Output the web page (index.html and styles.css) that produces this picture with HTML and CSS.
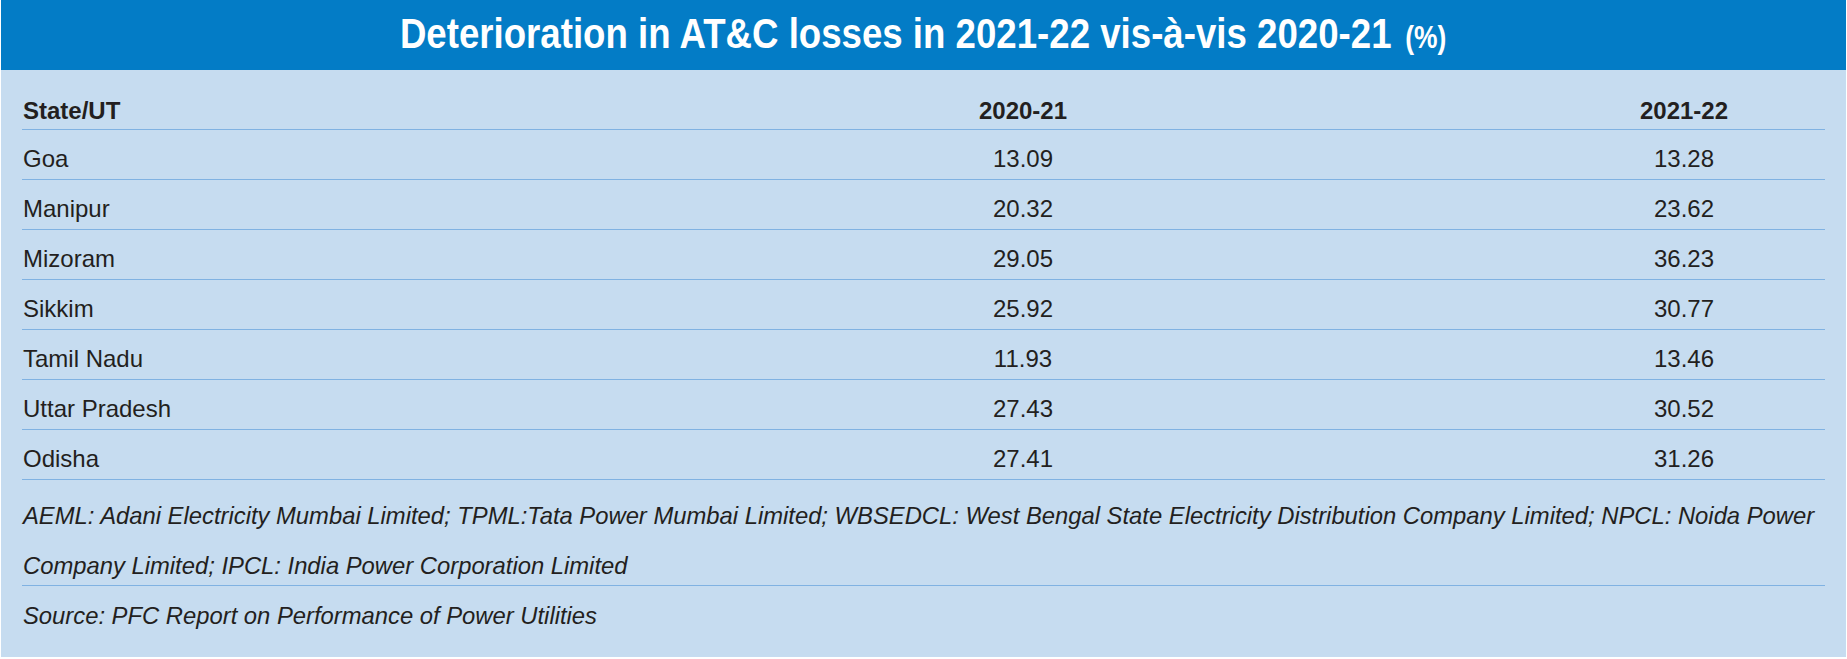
FILE: index.html
```html
<!DOCTYPE html>
<html lang="en">
<head>
<meta charset="utf-8">
<title>Deterioration in AT&amp;C losses</title>
<link rel="stylesheet" href="styles.css">
</head>
<body>
<div class="panel">
  <header class="banner">
    <h1 class="title"><span class="title-main">Deterioration in AT&amp;C losses in 2021-22 vis-à-vis 2020-21</span><span class="title-unit">(%)</span></h1>
  </header>
  <div class="body">
    <div class="table">
      <div class="row head">
        <div class="cell name">State/UT</div>
        <div class="cell num">2020-21</div>
        <div class="cell num">2021-22</div>
      </div>
      <div class="row">
        <div class="cell name">Goa</div>
        <div class="cell num">13.09</div>
        <div class="cell num">13.28</div>
      </div>
      <div class="row">
        <div class="cell name">Manipur</div>
        <div class="cell num">20.32</div>
        <div class="cell num">23.62</div>
      </div>
      <div class="row">
        <div class="cell name">Mizoram</div>
        <div class="cell num">29.05</div>
        <div class="cell num">36.23</div>
      </div>
      <div class="row">
        <div class="cell name">Sikkim</div>
        <div class="cell num">25.92</div>
        <div class="cell num">30.77</div>
      </div>
      <div class="row">
        <div class="cell name">Tamil Nadu</div>
        <div class="cell num">11.93</div>
        <div class="cell num">13.46</div>
      </div>
      <div class="row">
        <div class="cell name">Uttar Pradesh</div>
        <div class="cell num">27.43</div>
        <div class="cell num">30.52</div>
      </div>
      <div class="row">
        <div class="cell name">Odisha</div>
        <div class="cell num">27.41</div>
        <div class="cell num">31.26</div>
      </div>
    </div>
    <p class="note">AEML: Adani Electricity Mumbai Limited; TPML:Tata Power Mumbai Limited; WBSEDCL: West Bengal State Electricity Distribution Company Limited; NPCL: Noida Power Company Limited; IPCL: India Power Corporation Limited</p>
    <p class="source">Source: PFC Report on Performance of Power Utilities</p>
  </div>
</div>
</body>
</html>
```

FILE: styles.css
```css
html, body {
  margin: 0;
  padding: 0;
  background: #ffffff;
}

body {
  font-family: "Liberation Sans", Arial, sans-serif;
  color: #231f20;
}

.panel {
  width: 1845px;
  height: 657px;
  margin-left: 1px;
  background: #c6dcf0;
  display: flex;
  flex-direction: column;
}

.banner {
  height: 70px;
  background: #037cc6;
  display: flex;
  align-items: center;
  justify-content: center;
}

.title {
  margin: 0;
  color: #ffffff;
  font-weight: bold;
  font-size: 43px;
  line-height: 42px;
  white-space: nowrap;
  display: inline-block;
  transform: scaleX(0.852);
  transform-origin: center;
}

.title-unit {
  font-size: 31px;
  margin-left: 16px;
}

.body {
  padding: 0 21px 0 21px;
}

.table {
  display: flex;
  flex-direction: column;
}

.row {
  display: grid;
  grid-template-columns: 481px 1040px 282px;
  border-bottom: 1px solid #80b2e2;
  font-size: 24px;
  line-height: 24px;
  padding-top: 17px;
  box-sizing: content-box;
  height: 32px;
}

.row.head {
  font-weight: bold;
  padding-top: 29px;
  height: 30px;
}

.cell.name {
  text-align: left;
  padding-left: 1px;
}

.cell.num {
  text-align: center;
}

.note {
  margin: 0 0 -6px 0;
  padding: 11px 0 0 1px;
  font-style: italic;
  font-size: 23.8px;
  line-height: 50px;
}

.source {
  margin: 0;
  padding: 5px 0 0 1px;
  border-top: 1px solid #80b2e2;
  font-style: italic;
  font-size: 23.8px;
  line-height: 50px;
}
```
